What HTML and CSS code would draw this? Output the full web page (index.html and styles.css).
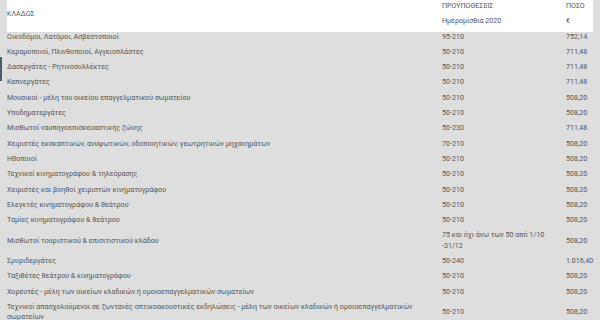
FILE: index.html
```html
<!DOCTYPE html>
<html lang="el">
<head>
<meta charset="utf-8">
<link rel="stylesheet" href="styles.css">
</head>
<body>
<div class="edge-mark"></div>
<div class="wrap">
<table class="pay">
  <colgroup>
    <col class="c-branch">
    <col class="c-cond">
    <col class="c-amount">
  </colgroup>
  <thead>
    <tr class="h1">
      <th rowspan="2" class="mid">ΚΛΑΔΟΣ</th>
      <th>ΠΡΟΫΠΟΘΕΣΕΙΣ</th>
      <th>ΠΟΣΟ</th>
    </tr>
    <tr>
      <th>Ημερομίσθια 2020</th>
      <th>€</th>
    </tr>
  </thead>
  <tbody>
    <tr><td>Οικοδόμοι, Λατόμοι, Ασβεστοποιοί</td><td>95-210</td><td>752,14</td></tr>
    <tr><td>Κεραμοποιοί, Πλινθοποιοί, Αγγειοπλάστες</td><td>50-210</td><td>711,48</td></tr>
    <tr><td>Δασεργάτες - Ρητινοσυλλέκτες</td><td>50-210</td><td>711,48</td></tr>
    <tr><td>Καπνεργάτες</td><td>50-210</td><td>711,48</td></tr>
    <tr><td>Μουσικοί - μέλη του οικείου επαγγελματικού σωματείου</td><td>50-210</td><td>508,20</td></tr>
    <tr><td>Υποδηματεργάτες</td><td>50-210</td><td>508,20</td></tr>
    <tr><td>Μισθωτοί ναυπηγοεπισκευαστικής ζώνης</td><td>50-230</td><td>711,48</td></tr>
    <tr><td>Χειριστές εκσκαπτικών, ανυψωτικών, οδοποιητικών, γεωτρητικών μηχανημάτων</td><td>70-210</td><td>508,20</td></tr>
    <tr><td>Ηθοποιοί</td><td>50-210</td><td>508,20</td></tr>
    <tr><td>Τεχνικοί κινηματογράφου &amp; τηλεόρασης</td><td>50-210</td><td>508,20</td></tr>
    <tr><td>Χειριστές και βοηθοί χειριστών κινηματογράφου</td><td>50-210</td><td>508,20</td></tr>
    <tr><td>Ελεγκτές κινηματογράφου &amp; θεάτρου</td><td>50-210</td><td>508,20</td></tr>
    <tr><td>Ταμίες κινηματογράφου &amp; θεάτρου</td><td>50-210</td><td>508,20</td></tr>
    <tr><td class="mid">Μισθωτοί τουριστικού &amp; επισιτιστικού κλάδου</td><td>75 και όχι άνω των 50 από 1/10 -31/12</td><td class="mid">508,20</td></tr>
    <tr><td>Σμυριδεργάτες</td><td>50-240</td><td>1.016,40</td></tr>
    <tr><td>Ταξιθέτες θεάτρου &amp; κινηματογράφου</td><td>50-210</td><td>508,20</td></tr>
    <tr><td>Χορευτές - μέλη των οικείων κλαδικών ή ομοιοεπαγγελματικών σωματείων</td><td>50-210</td><td>508,20</td></tr>
    <tr><td>Τεχνικοί απασχολούμενοι σε ζωντανές οπτικοακουστικές εκδηλώσεις - μέλη των οικείων κλαδικών ή ομοιοεπαγγελματικών σωματείων</td><td class="mid">50-210</td><td class="mid">508,20</td></tr>
  </tbody>
</table>
</div>
</body>
</html>
```
FILE: styles.css
```css
html, body {
  margin: 0;
  padding: 0;
}
body {
  background: #dedede;
  font-family: Roboto, "Noto Sans", sans-serif;
  font-size: 7.1px;
  color: #555;
  position: relative;
  width: 600px;
  height: 320px;
  overflow: hidden;
}
.wrap {
  padding-left: 7px;
}
.pay {
  border-collapse: collapse;
  table-layout: fixed;
  width: 586px;
}
.c-branch { width: 435px; }
.c-cond { width: 124px; }
.c-amount { width: 27px; }
.pay th,
.pay td {
  padding: 0 8px 5px 0;
  line-height: 10.3px;
  text-align: left;
  font-weight: 400;
  vertical-align: top;
  white-space: normal;
}
.pay td:last-child,
.pay th:last-child {
  padding-right: 0;
  white-space: nowrap;
}
.pay thead th {
  background: #fff;
}
.pay thead .h1 th {
  padding-top: 1px;
}
.pay .mid {
  vertical-align: middle;
}
.edge-mark {
  position: absolute;
  left: 0;
  top: 57px;
  width: 1.5px;
  height: 24px;
  background: #4f5d6b;
}
```
